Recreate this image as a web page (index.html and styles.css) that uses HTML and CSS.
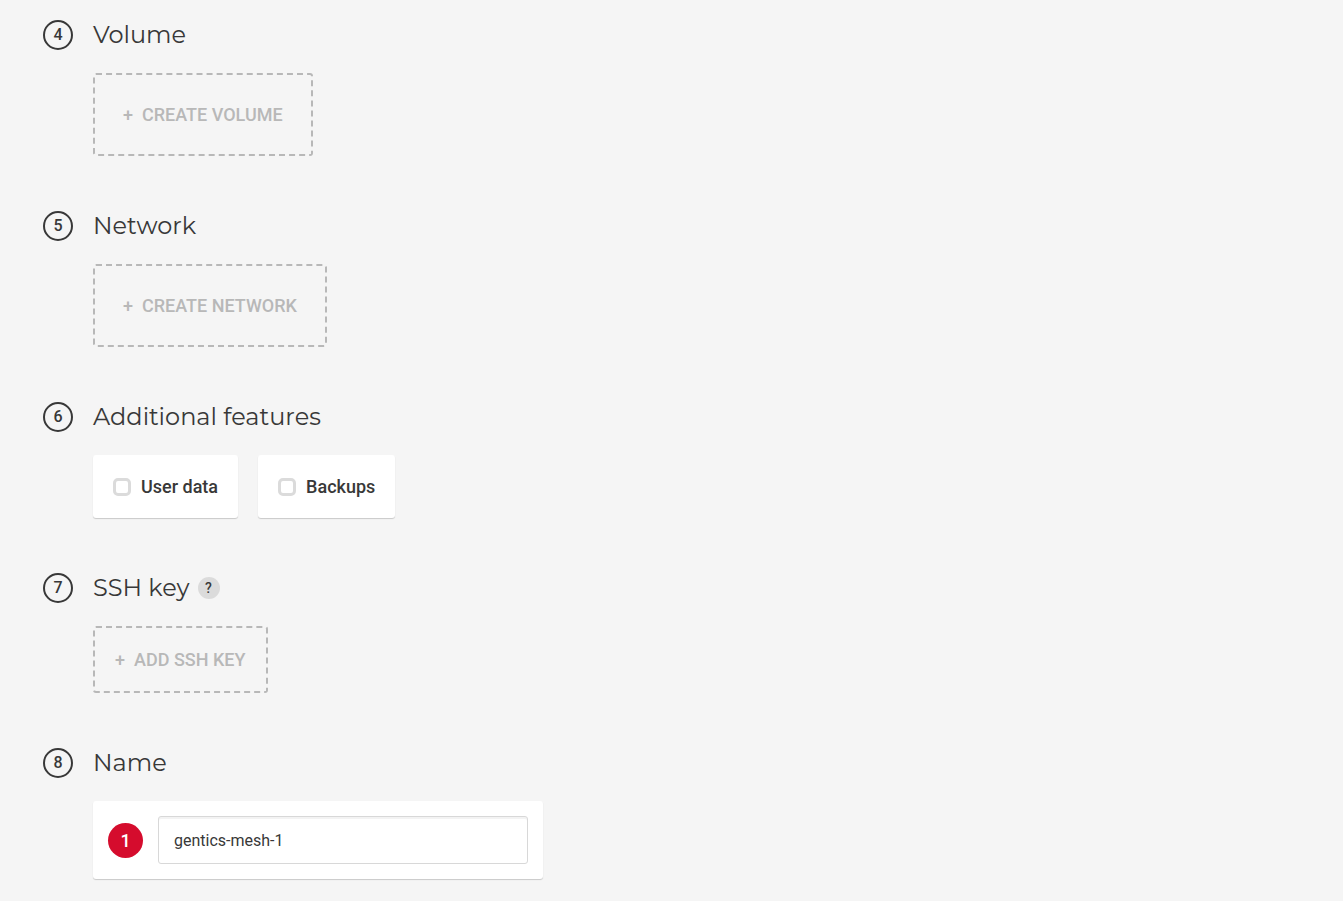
FILE: index.html
```html
<!DOCTYPE html>
<html lang="en">
<head>
<meta charset="utf-8">
<meta name="viewport" content="width=device-width, initial-scale=1">
<title>Create a server</title>
<link rel="stylesheet" href="styles.css">
</head>
<body>
<form class="steps">
  <section class="step">
    <span class="step-number">4</span>
    <h2 class="step-title">Volume</h2>
    <div class="step-body">
      <button type="button" class="create create-large"><span>+</span><span>CREATE VOLUME</span></button>
    </div>
  </section>
  <section class="step">
    <span class="step-number">5</span>
    <h2 class="step-title">Network</h2>
    <div class="step-body">
      <button type="button" class="create create-large"><span>+</span><span>CREATE NETWORK</span></button>
    </div>
  </section>
  <section class="step">
    <span class="step-number">6</span>
    <h2 class="step-title">Additional features</h2>
    <div class="step-body">
      <label class="card feature"><input type="checkbox" class="check">User data</label>
      <label class="card feature"><input type="checkbox" class="check">Backups</label>
    </div>
  </section>
  <section class="step">
    <span class="step-number">7</span>
    <div class="step-head">
      <h2 class="step-title">SSH key</h2>
      <button type="button" class="help" aria-label="Help">?</button>
    </div>
    <div class="step-body">
      <button type="button" class="create"><span>+</span><span>ADD SSH KEY</span></button>
    </div>
  </section>
  <section class="step">
    <span class="step-number">8</span>
    <h2 class="step-title" id="name-title">Name</h2>
    <div class="step-body">
      <div class="card server-name">
        <span class="count">1</span>
        <input type="text" class="name-input" value="gentics-mesh-1" aria-labelledby="name-title">
      </div>
    </div>
  </section>
</form>
</body>
</html>
```
FILE: styles.css
```css
* {
  box-sizing: border-box;
}

body {
  margin: 0;
  background: #f5f5f5;
  color: #383838;
  font-family: Roboto, sans-serif;
}

.steps {
  display: flex;
  flex-direction: column;
  gap: 55px;
  padding: 20px 43px 21px;
}

.step {
  display: grid;
  grid-template-columns: 30px 1fr;
  column-gap: 20px;
  row-gap: 23px;
}

.step-number {
  display: flex;
  align-items: center;
  justify-content: center;
  width: 30px;
  height: 30px;
  padding-bottom: 1px;
  border: 2px solid #383838;
  border-radius: 50%;
  font-size: 16px;
  font-weight: 500;
}

.step-head {
  display: flex;
  align-items: center;
  gap: 8px;
}

.step-title {
  margin: 0;
  font-family: Montserrat, Inter, sans-serif;
  font-size: 24px;
  font-weight: 400;
  line-height: 30px;
}

.step-body {
  grid-column: 2;
  display: flex;
  flex-wrap: wrap;
  gap: 20px;
}

.create {
  display: flex;
  gap: 9px;
  padding: 20px;
  border: 2px dashed #b8b8b8;
  border-radius: 3px;
  background: none;
  color: #b8b8b8;
  font: 500 18px/23px Roboto, sans-serif;
  cursor: pointer;
}

.create-large {
  padding: 28px;
}

.card {
  display: flex;
  align-items: center;
  border-radius: 3px;
  background: #fff;
  box-shadow: 0 1px 1px rgba(0, 0, 0, 0.18);
}

.feature {
  gap: 10px;
  padding: 20px;
  font-size: 18px;
  font-weight: 500;
  line-height: 23px;
}

.check {
  appearance: none;
  width: 18px;
  height: 18px;
  margin: 0;
  border: 3px solid #dbdbdb;
  border-radius: 5px;
  background: #fff;
}

.check:checked {
  background: #d50c2d;
}

.help {
  width: 22px;
  height: 22px;
  padding: 0;
  border: 0;
  border-radius: 50%;
  background: #dbdbdb;
  color: #383838;
  font: 500 14px/22px Roboto, sans-serif;
}

.server-name {
  width: 100%;
  max-width: 450px;
  gap: 15px;
  padding: 15px;
}

.count {
  flex: none;
  width: 35px;
  height: 35px;
  border-radius: 50%;
  background: #d50c2d;
  color: #fff;
  font-size: 18px;
  font-weight: 500;
  line-height: 35px;
  text-align: center;
}

.name-input {
  flex: 1;
  min-width: 0;
  height: 48px;
  padding: 0 15px;
  border: 1px solid #d8d8d8;
  border-radius: 3px;
  background: #fff;
  box-shadow: inset 0 2px 0 #f3f3f3;
  color: #383838;
  font: 400 16px/20px Roboto, sans-serif;
}
```
